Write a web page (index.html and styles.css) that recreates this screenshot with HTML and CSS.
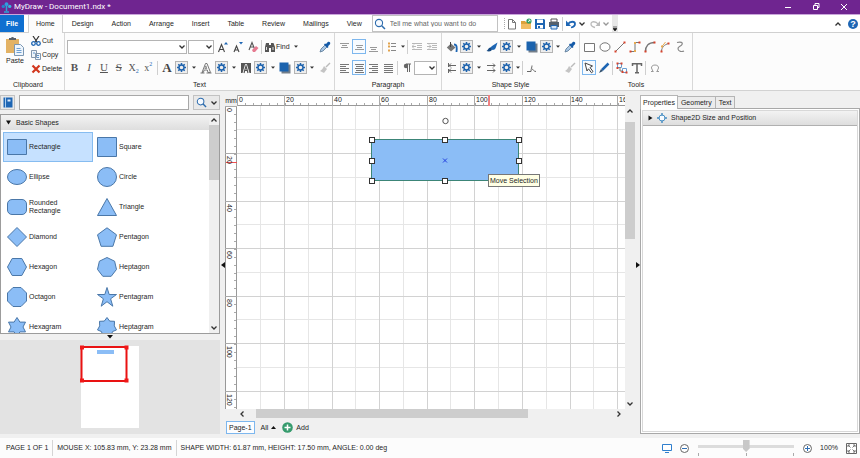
FILE: index.html
```html
<!DOCTYPE html>
<html lang="en">
<head>
<meta charset="utf-8">
<title>MyDraw - Document1.ndx *</title>
<link rel="stylesheet" href="styles.css">
</head>
<body>
<svg class="defs" width="0" height="0" aria-hidden="true">
  <symbol id="gear" viewBox="0 0 13 13"><rect x=".5" y=".5" width="12" height="12" fill="#eee" stroke="#b4b4b4"/><g stroke="#1d62ad" stroke-width="1.500"><path d="M6.500 2v9M2 6.500h9M3.300 3.300l6.400 6.400M9.700 3.300L3.300 9.700"/></g><circle cx="6.500" cy="6.500" r="2.500" fill="#eee" stroke="#1d62ad" stroke-width="1.400"/></symbol>
  <symbol id="caret" viewBox="0 0 4 3"><path d="M0 .5h4L2 2.800z" fill="#333"/></symbol>
  <symbol id="chevron" viewBox="0 0 8 6"><path d="M1.500 1.500L4 4l2.500-2.500" fill="none" stroke="#333" stroke-width="1.300"/></symbol>
  <symbol id="dropper" viewBox="0 0 12 12"><path d="M1 11l1-3 4-4 2 2-4 4z" fill="#a9c7e6" stroke="#587794" stroke-width=".8"/><path d="M5 3.500l3.500 3.500 1-1-.5-.8 2-2C12 1.700 10.300 0 8.800 1L7 3l-1-.5z" fill="#145aa8"/></symbol>
  <symbol id="painter" viewBox="0 0 12 12"><path d="M11 1L7 5" stroke="#bbb" stroke-width="1.500"/><path d="M5 4l3 3-3 4-4-2c2-1 3-3 4-5z" fill="#c4c4c4"/></symbol>
  <symbol id="shadow" viewBox="0 0 12 12"><rect x="2.500" y="2.500" width="9" height="9" fill="#747f8a"/><rect x=".5" y=".5" width="9" height="9" fill="#1b63ae"/></symbol>
  <symbol id="lens" viewBox="0 0 12 12"><circle cx="5" cy="5" r="3.600" fill="#f6faff" stroke="#2d6cad" stroke-width="1.100"/><path d="M7.700 7.700l3.300 3.300" stroke="#2d6cad" stroke-width="1.500"/></symbol>
</svg>

<header class="titlebar">
  <svg width="11" height="11" viewBox="0 0 11 11"><path d="M5.500 4v5M3 10h5" stroke="#2aa7d6" stroke-width="1.500"/><circle cx="5.500" cy="2.200" r="1.900" fill="#2e9ee0"/><circle cx="2.300" cy="4.400" r="1.700" fill="#2485cf"/><circle cx="8.700" cy="4.400" r="1.700" fill="#35b9dc"/></svg>
  <span class="title">MyDraw - Document1.ndx *</span>
  <div class="window-buttons">
    <button aria-label="Minimize"><svg width="8" height="8"><path d="M1 4.500h6" stroke="#fff"/></svg></button>
    <button aria-label="Restore"><svg width="8" height="8"><path d="M1.500 2.500h4v4h-4zM3 2V.5h4v4H6" fill="none" stroke="#fff"/></svg></button>
    <button aria-label="Close"><svg width="8" height="8"><path d="M1 1l6 6M7 1L1 7" stroke="#fff"/></svg></button>
  </div>
</header>

<nav class="tabs">
  <button class="tab file">File</button>
  <button class="tab home">Home</button>
  <button class="tab">Design</button>
  <button class="tab">Action</button>
  <button class="tab">Arrange</button>
  <button class="tab">Insert</button>
  <button class="tab">Table</button>
  <button class="tab">Review</button>
  <button class="tab">Mailings</button>
  <button class="tab">View</button>
  <label class="tell"><svg width="12" height="12"><use href="#lens"/></svg><input type="text" placeholder="Tell me what you want to do" aria-label="Tell me what you want to do"></label>
  <div class="quick">
    <span class="grip"></span>
    <button aria-label="New"><svg width="12" height="12"><path d="M2.500 1.500h4l3 3v6.500h-7zM6.500 1.500v3h3" fill="#fff" stroke="#777"/></svg></button>
    <button aria-label="Open"><svg width="12" height="12"><path d="M1 3h4l1 1h5v7H1z" fill="#dca23c"/><path d="M1 6h10v5H1z" fill="#f1bd63"/><circle cx="9" cy="3" r="2.600" fill="#2f9d68"/><path d="M8 4l2-2M8.500 2H10v1.500" stroke="#fff" fill="none" stroke-width=".8"/></svg></button>
    <button aria-label="Save"><svg width="12" height="12"><path d="M1 1h9l1 1v9H1z" fill="#1e66b4"/><path d="M3 1.500h6v3.500H3zM3 7h6v3.500H3z" fill="#fff"/><path d="M4 8h2v2H4z" fill="#1e66b4"/></svg></button>
    <button aria-label="Print"><svg width="12" height="12"><path d="M3 1h6v3H3z" fill="#fff" stroke="#555"/><path d="M1 4h10v5H1z" fill="#55606b"/><path d="M3 7.500h6v3.500H3z" fill="#d7e7f8" stroke="#1e66b4"/></svg></button>
    <span class="sep"></span>
    <button aria-label="Undo"><svg width="12" height="12"><path d="M3 6c2-3 7-3 7 0 0 2-2 3-4 3.500" fill="none" stroke="#1e66b4" stroke-width="1.800"/><path d="M1 2.500v5.500h5z" fill="#1e66b4"/></svg></button>
    <button class="narrow" aria-label="Undo list"><svg width="8" height="6"><use href="#chevron"/></svg></button>
    <button class="faded redo" aria-label="Redo"><svg width="12" height="12"><path d="M9 6C7 3 2 3 2 6c0 2 2 3 4 3.500" fill="none" stroke="#777" stroke-width="1.300"/><path d="M11 3v5H6.500z" fill="#777"/></svg></button>
    <button class="narrow faded" aria-label="Redo list"><svg width="8" height="6"><use href="#chevron"/></svg></button>
    <button class="more" aria-label="Customize"><svg width="4" height="6"><path d="M0 1h4M0 2.500h4L2 5z" fill="#111" stroke="#111" stroke-width=".6"/></svg></button>
  </div>
  <div class="tabs-end">
    <button aria-label="Collapse ribbon"><svg width="8" height="6"><path d="M1.500 4.500L4 2l2.500 2.500" fill="none" stroke="#333" stroke-width="1.300"/></svg></button>
    <button class="help" aria-label="Help">?</button>
  </div>
</nav>

<section class="ribbon">
  <div class="group clipboard">
    <div class="clip-body">
      <button class="paste"><svg width="20" height="20"><path d="M1 3h13v14H1z" fill="#e3b264"/><path d="M4 4V2h2a1.600 1.600 0 0 1 3 0h2v2z" fill="#5a5f66"/><path d="M9.500 8.500h6l3 3V19.500h-9z" fill="#eef5fc" stroke="#7b97b3"/><path d="M11.500 12.500h4M11.500 14.500h5M11.500 16.500h5" stroke="#6d9fd2"/></svg>Paste</button>
      <div class="clip-list">
        <button><svg width="10" height="10"><path d="M2 0l4 6M8 0L4 6" stroke="#333" stroke-width="1.200"/><circle cx="2.500" cy="7.500" r="1.800" fill="none" stroke="#1e66b4" stroke-width="1.300"/><circle cx="7.500" cy="7.500" r="1.800" fill="none" stroke="#1e66b4" stroke-width="1.300"/></svg>Cut</button>
        <button><svg width="10" height="10"><path d="M.5.5h5v7h-5zM4.500 3.500h5v6h-5z" fill="#edf4fb" stroke="#8397ad"/><path d="M2 3h2M6 5.500h2M6 7.500h2" stroke="#5d94cc"/></svg>Copy</button>
        <button><svg width="10" height="10"><path d="M1.500 1.500l7 7M8.500 1.500l-7 7" stroke="#d2371e" stroke-width="2.200"/></svg>Delete</button>
      </div>
    </div>
    <h2>Clipboard</h2>
  </div>

  <div class="group text">
    <div class="row">
      <span class="combo font"><select aria-label="Font"><option></option></select><svg width="8" height="6"><use href="#chevron"/></svg></span>
      <span class="combo size"><select aria-label="Font size"><option></option></select><svg width="8" height="6"><use href="#chevron"/></svg></span>
      <button class="tool" aria-label="Grow font"><svg width="12" height="12"><path d="M1.500 11L4.500 3.500 7.500 11M2.500 8.500h4" fill="none" stroke="#444" stroke-width="1.100"/><path d="M7 3.500L9 1l2 2.500z" fill="#1e66b4"/></svg></button>
      <button class="tool" aria-label="Shrink font"><svg width="12" height="12"><path d="M2 11l2.500-6L7 11M3 9h3" fill="none" stroke="#444" stroke-width="1.100"/><path d="M7 1l2 2.500L11 1z" fill="#1e66b4"/></svg></button>
      <button class="tool" aria-label="Clear format"><svg width="12" height="12"><path d="M2 9L5 1.500 8 9M3 6h4" fill="none" stroke="#555" stroke-width="1.100"/><path d="M5 9l4-4 2.500 2L8 11H6z" fill="#e67b91"/></svg></button>
      <span class="sep"></span>
      <button class="find"><svg width="12" height="12"><path d="M1 11V6l1-4h3v9zM7 11V2h2.500L11 6v5zM5 4h2v3H5z" fill="#555"/><path d="M2.500 6v3M9 6v3" stroke="#ddd"/></svg>Find<svg class="dd" width="4" height="3"><use href="#caret"/></svg></button>
      <button class="tool push" aria-label="Pick text style"><svg width="12" height="12"><use href="#dropper"/></svg></button>
    </div>
    <div class="row">
      <button class="tool letter bold">B</button>
      <button class="tool letter italic">I</button>
      <button class="tool letter under">U</button>
      <button class="tool letter strike">S</button>
      <button class="tool letter script">X<sub>2</sub></button>
      <button class="tool letter script">x<sup>2</sup></button>
      <span class="sep wide"></span>
      <button class="tool letter big">A</button><button class="tool" aria-label="Text fill"><svg width="13" height="13"><use href="#gear"/></svg></button><button class="drop" aria-label="More"><svg width="4" height="3"><use href="#caret"/></svg></button>
      <button class="tool" aria-label="Text outline"><svg width="12" height="12"><path d="M.5 11h4M6.500 11h5" stroke="#777"/><path d="M2 10.500L5.500 1.500h1.500l3.500 9H8l-.7-2.500H4.200l-.9 2.500z" fill="#fff" stroke="#777"/><path d="M4.800 6.500h2L5.900 3.800z" fill="#fff" stroke="#777" stroke-width=".8"/></svg></button><button class="tool" aria-label="Outline options"><svg width="13" height="13"><use href="#gear"/></svg></button><button class="drop" aria-label="More"><svg width="4" height="3"><use href="#caret"/></svg></button>
      <button class="tool" aria-label="Text background"><svg width="12" height="12"><path d="M1 1h10v10H1z" fill="#555"/><path d="M2.500 11L5.200 2h1.600l2.700 9z" fill="#fff"/><path d="M4 11L6 4l2 7M4.500 8.500h3" fill="none" stroke="#555" stroke-width="1.200"/></svg></button><button class="tool" aria-label="Background options"><svg width="13" height="13"><use href="#gear"/></svg></button><button class="drop" aria-label="More"><svg width="4" height="3"><use href="#caret"/></svg></button>
      <button class="tool" aria-label="Text shadow"><svg width="12" height="12"><use href="#shadow"/></svg></button><button class="tool" aria-label="Shadow options"><svg width="13" height="13"><use href="#gear"/></svg></button><button class="drop" aria-label="More"><svg width="4" height="3"><use href="#caret"/></svg></button>
      <button class="tool push" aria-label="Format painter"><svg width="12" height="12"><use href="#painter"/></svg></button>
    </div>
    <h2>Text</h2>
  </div>

  <div class="group paragraph">
    <div class="row">
      <button class="tool" aria-label="Align top"><svg width="9" height="10"><path d="M0 1.500h9M2 3.500h5M1 5.500h7" stroke="#999"/></svg></button>
      <button class="tool on" aria-label="Align middle"><svg width="9" height="10"><path d="M1 3.500h7M2 5.500h5M0 7.500h9" stroke="#999"/></svg></button>
      <button class="tool" aria-label="Align bottom"><svg width="9" height="10"><path d="M1 5.500h7M2 7.500h5M0 9.500h9" stroke="#999"/></svg></button>
      <span class="sep"></span>
      <button class="tool" aria-label="Bullets"><svg width="10" height="10"><path d="M1 1.500h2M1 4.500h2M1 8.500h2" stroke="#e2a34d" stroke-width="2"/><path d="M4 1.500h5M4 4.500h5M4 8.500h5" stroke="#888"/></svg></button>
      <button class="drop slim" aria-label="More"><svg width="4" height="3"><use href="#caret"/></svg></button>
      <span class="sep"></span>
      <button class="tool faded" aria-label="Decrease indent"><svg width="10" height="10"><path d="M0 1.500h10M5 3.500h5M5 5.500h5M0 7.500h10M4 4.500H0M2 2.500l-2 2 2 2" fill="none" stroke="#777"/></svg></button>
      <button class="tool faded" aria-label="Increase indent"><svg width="10" height="10"><path d="M0 1.500h10M5 3.500h5M5 5.500h5M0 7.500h10M0 4.500h4M2 2.500l2 2-2 2" fill="none" stroke="#777"/></svg></button>
    </div>
    <div class="row">
      <button class="tool" aria-label="Align left"><svg width="9" height="10"><path d="M0 1.500h9M0 3.500h6M0 5.500h9M0 7.500h6M0 9.500h9" stroke="#777"/></svg></button>
      <button class="tool on" aria-label="Align center"><svg width="9" height="10"><path d="M0 1.500h9M1 3.500h7M0 5.500h9M1 7.500h7M0 9.500h9" stroke="#777"/></svg></button>
      <button class="tool" aria-label="Align right"><svg width="9" height="10"><path d="M0 1.500h9M3 3.500h6M0 5.500h9M3 7.500h6M0 9.500h9" stroke="#777"/></svg></button>
      <button class="tool" aria-label="Justify"><svg width="9" height="10"><path d="M0 1.500h9M0 3.500h9M0 5.500h9M0 7.500h9M0 9.500h9" stroke="#777"/></svg></button>
      <span class="sep"></span>
      <button class="tool" aria-label="Text direction"><svg width="8" height="10"><path d="M4.500 1v8M6.500 1v8M3 1h5" stroke="#666"/><circle cx="3" cy="3" r="2.200" fill="#666"/></svg></button>
      <span class="combo spacing"><select aria-label="Line spacing"><option></option></select><svg width="8" height="6"><use href="#chevron"/></svg></span>
    </div>
    <h2>Paragraph</h2>
  </div>

  <div class="group style">
    <div class="row">
      <button class="tool" aria-label="Fill"><svg width="12" height="12"><path d="M5 2.500l4.500 4L5 10.500.8 6.500z" fill="#777"/><path d="M4.500 1v5" stroke="#444"/><path d="M8 3.500c3 0 3 3 2.500 7.500" fill="none" stroke="#1e66b4" stroke-width="1.800"/></svg></button><button class="tool" aria-label="Fill options"><svg width="13" height="13"><use href="#gear"/></svg></button><button class="drop" aria-label="More"><svg width="4" height="3"><use href="#caret"/></svg></button>
      <button class="tool" aria-label="Stroke"><svg width="12" height="12"><path d="M11.500 1.500L6 5l-2 2 2.500 2c2 0 3-1 3.500-3z" fill="#1e66b4"/><path d="M4.500 6.500C2 7 2.500 9 .5 10c2.500.8 5 .5 5.500-1.500z" fill="#174a82"/></svg></button><button class="tool" aria-label="Stroke options"><svg width="13" height="13"><use href="#gear"/></svg></button><button class="drop" aria-label="More"><svg width="4" height="3"><use href="#caret"/></svg></button>
      <button class="tool" aria-label="Shadow"><svg width="12" height="12"><use href="#shadow"/></svg></button><button class="tool" aria-label="Shadow options"><svg width="13" height="13"><use href="#gear"/></svg></button><button class="drop slim" aria-label="More"><svg width="4" height="3"><use href="#caret"/></svg></button>
      <button class="tool push" aria-label="Pick style"><svg width="12" height="12"><use href="#dropper"/></svg></button>
    </div>
    <div class="row">
      <button class="tool" aria-label="Begin arrow"><svg width="10" height="10"><path d="M1.500 0v4M1.500 6v4M1 2.500h8M1 7.500h8M4 .5l-2 2 2 2M4 5.500l-2 2 2 2" fill="none" stroke="#666"/></svg></button><button class="tool" aria-label="Begin options"><svg width="13" height="13"><use href="#gear"/></svg></button><button class="drop" aria-label="More"><svg width="4" height="3"><use href="#caret"/></svg></button>
      <button class="tool" aria-label="End arrow"><svg width="10" height="10"><path d="M0 2.500h8M0 7.500h8M6 .5l2 2-2 2M6 5.500l2 2-2 2" fill="none" stroke="#666"/></svg></button><button class="tool" aria-label="End options"><svg width="13" height="13"><use href="#gear"/></svg></button><button class="drop slim" aria-label="More"><svg width="4" height="3"><use href="#caret"/></svg></button>
      <span class="sep"></span>
      <button class="tool" aria-label="Line jump"><svg width="10" height="10"><path d="M0 8.500h4c0-3 1-4 1-6M5 6c1 0 1.500 2.500 4 2.500" fill="none" stroke="#666"/></svg></button>
      <button class="tool push" aria-label="Format painter"><svg width="12" height="12"><use href="#painter"/></svg></button>
    </div>
    <h2>Shape Style</h2>
  </div>

  <div class="group tools">
    <div class="row">
      <button class="tool" aria-label="Rectangle tool"><svg width="12" height="10"><path d="M.5 1.500h10v8H.5z" fill="#fff" stroke="#777"/></svg></button>
      <button class="tool" aria-label="Ellipse tool"><svg width="12" height="10"><ellipse cx="6" cy="5" rx="5" ry="4.200" fill="#fff" stroke="#777"/></svg></button>
      <button class="tool" aria-label="Line tool"><svg width="12" height="12"><path d="M1.500 10.500l9-9" stroke="#777"/><path d="M.5 9.500h2v2h-2zM9.500.5h2v2h-2z" fill="#d8432c"/></svg></button>
      <button class="tool" aria-label="Polyline tool"><svg width="12" height="12"><path d="M1.500 10.500H6v-9h4.500" fill="none" stroke="#777"/><path d="M.5 9.500h2v2h-2zM9.500.5h2v2h-2z" fill="#d8432c"/><path d="M5 1h2v2H5zM5 9h2v2H5z" fill="#e8aa50"/></svg></button>
      <button class="tool" aria-label="Arc tool"><svg width="12" height="12"><path d="M1.500 10.500c0-5 3-9 9-9" fill="none" stroke="#777" stroke-width="1.500"/><path d="M.5 9.500h2v2h-2zM9.500.5h2v2h-2z" fill="#d8432c"/></svg></button>
      <button class="tool" aria-label="Curve tool"><svg width="12" height="12"><path d="M2.500 10.500c0-4 3-7 7-8" fill="none" stroke="#777"/><path d="M3 5.500L6.500 1" stroke="#e8aa50"/><path d="M1.500 9.500h2v2h-2zM8.500 1.500h2v2h-2z" fill="#d8432c"/><path d="M2 4.500h2v2H2z" fill="#e8aa50"/></svg></button>
      <button class="tool" aria-label="Freehand tool"><svg width="10" height="12"><path d="M2 1.500c4-1 6 0 5 2S2.500 5.500 3 8s4 3 6 2" fill="none" stroke="#888" stroke-width="1.200"/></svg></button>
    </div>
    <div class="row">
      <button class="tool on" aria-label="Pointer tool"><svg width="12" height="12"><path d="M2 1l7.500 3-2.500 1.500 3 4-1.500 1.300-3-4L4 9z" fill="#fff" stroke="#444"/></svg></button>
      <button class="tool" aria-label="Pencil tool"><svg width="12" height="12"><path d="M10.500 1.500L4 8" stroke="#1e66b4" stroke-width="2.500"/><path d="M3 7l2 2-4 2z" fill="#32506e"/></svg></button>
      <span class="sep"></span>
      <button class="tool" aria-label="Connector tool"><svg width="12" height="12"><path d="M1.500 1.500h4v4h-4zM6.500 6.500h4v4h-4z" fill="#fff" stroke="#6a9ed3"/><path d="M4 5v4h3" stroke="#777" fill="none"/><path d="M.5.5h2v2h-2zM4.500.5h2v2h-2zM.5 5h2v2h-2zM9.500 9.500h2v2h-2zM5.500 9h2v2h-2z" fill="#d8432c"/></svg></button>
      <button class="tool" aria-label="Text tool"><svg width="12" height="12"><path d="M1.500 4V1.700h9V4M6 2v9M4 10.700h4" fill="none" stroke="#666" stroke-width="1.500"/></svg></button>
      <span class="sep"></span>
      <button class="tool" aria-label="Lasso tool"><svg width="10" height="10"><path d="M3 8.500L1.500 5C1 1 9 1 8.500 5L7 8.500M1 8.500h2.500M6.500 8.500H9" fill="none" stroke="#999"/></svg></button>
    </div>
    <h2>Tools</h2>
  </div>
</section>

<main class="work">
  <aside class="library">
    <div class="find-row">
      <button class="book" aria-label="Libraries"><svg width="10" height="11"><path d="M.5.5h9v10h-9z" fill="#1e66b4"/><path d="M2.500 0v11" stroke="#a9cbed"/><path d="M4.500 2.500h3v2h-3z" fill="#dceafa"/></svg></button>
      <input type="text" aria-label="Find shapes">
      <button class="go" aria-label="Search"><svg width="11" height="11"><use href="#lens"/></svg><svg width="8" height="6"><use href="#chevron"/></svg></button>
    </div>
    <div class="shapes">
      <div class="shape-area">
        <button class="stencil"><svg width="5" height="5"><path d="M0 .5h5l-2.500 4z" fill="#111"/></svg>Basic Shapes</button>
        <div class="shape-grid">
          <button class="shape sel"><svg viewBox="0 0 20 20"><path d="M.5 2.500h19v15H.5z"/></svg>Rectangle</button>
          <button class="shape"><svg viewBox="0 0 20 20"><path d="M.5.5h19v19H.5z"/></svg>Square</button>
          <button class="shape"><svg viewBox="0 0 20 20"><ellipse cx="10" cy="10" rx="9.500" ry="7.500"/></svg>Ellipse</button>
          <button class="shape"><svg viewBox="0 0 20 20"><circle cx="10" cy="10" r="9.500"/></svg>Circle</button>
          <button class="shape"><svg viewBox="0 0 20 20"><rect x=".5" y="2.500" width="19" height="15" rx="4.500"/></svg><span>Rounded<br>Rectangle</span></button>
          <button class="shape"><svg viewBox="0 0 20 20"><path d="M10 1.500l9.500 17H.5z"/></svg>Triangle</button>
          <button class="shape"><svg viewBox="0 0 20 20"><path d="M10 .5l9.500 9.500-9.500 9.500L.5 10z"/></svg>Diamond</button>
          <button class="shape"><svg viewBox="0 0 20 20"><path d="M10 .8l9.500 7-3.600 11.500H4.100L.5 7.800z"/></svg>Pentagon</button>
          <button class="shape"><svg viewBox="0 0 20 20"><path d="M5.200 1.500h9.600L19.500 10l-4.700 8.500H5.200L.5 10z"/></svg>Hexagon</button>
          <button class="shape"><svg viewBox="0 0 20 20"><path d="M10 .5l7.600 3.700 1.900 8.200-5.300 6.900H5.800L.5 12.400l1.900-8.200z"/></svg>Heptagon</button>
          <button class="shape"><svg viewBox="0 0 20 20"><path d="M6 .5h8L19.500 6v8L14 19.500H6L.5 14V6z"/></svg>Octagon</button>
          <button class="shape"><svg viewBox="0 0 20 20"><path d="M10 .5l2.200 7h7.300l-5.900 4.300 2.200 7.400-5.800-4.500-5.800 4.500 2.200-7.400L.5 7.500h7.300z"/></svg>Pentagram</button>
          <button class="shape"><svg viewBox="0 0 20 20"><path d="M10 .5l2.900 4.600h5.600L16 10l2.500 4.900h-5.600L10 19.500l-2.900-4.600H1.500L4 10 1.500 5.100h5.600z"/></svg>Hexagram</button>
          <button class="shape"><svg viewBox="0 0 20 20"><path d="M10 .5l2.700 3.600 4.800.2-.2 4.600 2.200 4-4 1.700-1.500 4.700-4-1.900-4 1.900-1.500-4.700-4-1.700 2.200-4-.2-4.600 4.800-.2z"/></svg>Heptagram</button>
        </div>
      </div>
      <div class="vbar"><svg width="8" height="6"><path d="M1.500 4.500L4 2l2.500 2.500" fill="none" stroke="#333" stroke-width="1.300"/></svg><div class="track"><div class="thumb lib-thumb"></div></div><svg width="8" height="6"><use href="#chevron"/></svg></div>
    </div>
    <div class="hsplit"><svg width="6" height="4"><path d="M0 0h6L3 3.500z" fill="#111"/></svg></div>
    <div class="overview"><svg width="62" height="84"><path d="M2 1h58v82H2z" fill="#fff"/><path d="M18 5h17v4H18z" fill="#8bbdf6"/><path d="M2.500 2h45v34h-45z" fill="none" stroke="#e91212" stroke-width="2"/><path d="M1 .5h4v4H1zM45.500.5h4v4h-4zM1 33.500h4v4H1zM45.500 33.500h4v4h-4z" fill="#f01818"/></svg></div>
  </aside>

  <div class="vsplit"><svg width="4" height="6"><path d="M4 0v6L0 3z" fill="#111"/></svg></div>

  <section class="editor">
    <div class="unit">mm</div>
    <svg class="ruler-h"><path d="M0 .5h2000" stroke="#999"/><path d="M0 10.500h2000" stroke="#999"/><path d="M0 9h2000" stroke="#aaa" stroke-width="2" stroke-dasharray="1 6.930"/><path d="M.5 0v11M47.500 0v11M95.500 0v11M142.500 0v11M190.500 0v11M237.500 0v11M285.500 0v11M333.500 0v11M380.500 0v11" stroke="#aaa"/><path d="M252 0v11" stroke="#f08080" stroke-width="2"/>
      <text x="2" y="7">0</text><text x="49" y="7">20</text><text x="97" y="7">40</text><text x="144" y="7">60</text><text x="192" y="7">80</text><text x="239" y="7">100</text><text x="287" y="7">120</text><text x="334" y="7">140</text><text x="382" y="7">160</text></svg>
    <svg class="ruler-v"><path d="M.5 0v2000" stroke="#999"/><path d="M11.500 0v2000" stroke="#999"/><path d="M10 0v2000" stroke="#aaa" stroke-width="2" stroke-dasharray="1 6.930"/><path d="M0 .5h12M0 47.500h12M0 95.500h12M0 142.500h12M0 190.500h12M0 237.500h12M0 285.500h12" stroke="#aaa"/><path d="M1 56h11" stroke="#f05050"/>
      <g transform="rotate(90)"><text x="2" y="-2">0</text><text x="50" y="-2">20</text><text x="98" y="-2">40</text><text x="145" y="-2">60</text><text x="193" y="-2">80</text><text x="240" y="-2">100</text><text x="288" y="-2">120</text></g></svg>
    <div class="canvas">
      <svg class="page"><path d="M23.500 0v2000M71.500 0v2000M118.500 0v2000M166.500 0v2000M213.500 0v2000M261.500 0v2000M309.500 0v2000M356.500 0v2000M0 23.500h2000M0 71.500h2000M0 118.500h2000M0 166.500h2000M0 213.500h2000M0 261.500h2000" stroke="#e6e6e6"/><path d="M47.500 0v2000M95.500 0v2000M142.500 0v2000M190.500 0v2000M237.500 0v2000M285.500 0v2000M333.500 0v2000M380.500 0v2000M0 47.500h2000M0 95.500h2000M0 142.500h2000M0 190.500h2000M0 237.500h2000M0 285.500h2000" stroke="#d2d2d2"/>
        <path d="M134.500 33.500h147v41h-147z" fill="#8bbdf6" stroke="#3c8577"/>
        <path class="smooth" d="M206 52.500l4 4M210 52.500l-4 4" stroke="#2340e0"/>
        <circle cx="208.500" cy="15" r="2.700" fill="#fff" stroke="#555"/>
        <path d="M132.500 31.500h5v5h-5zM205.500 31.500h5v5h-5zM279.500 31.500h5v5h-5zM132.500 52.500h5v5h-5zM279.500 52.500h5v5h-5zM132.500 72.500h5v5h-5zM205.500 72.500h5v5h-5zM279.500 72.500h5v5h-5z" fill="#fff" stroke="#333"/>
      </svg>
      <div class="tip">Move Selection</div>
    </div>
    <div class="vbar canvas-v"><svg width="8" height="6"><path d="M1.500 4.500L4 2l2.500 2.500" fill="none" stroke="#333" stroke-width="1.300"/></svg><div class="track"><div class="thumb"></div></div><svg width="8" height="6"><use href="#chevron"/></svg></div>
    <div class="hbar"><svg width="6" height="8"><path d="M4.500 1.500L2 4l2.500 2.500" fill="none" stroke="#333" stroke-width="1.300"/></svg><div class="track"><div class="thumb"></div></div><svg width="6" height="8"><path d="M1.500 1.500L4 4 1.500 6.500" fill="none" stroke="#333" stroke-width="1.300"/></svg></div>
    <div class="pages">
      <button class="page-tab">Page-1</button>
      <button class="all">All<svg width="5" height="3"><path d="M0 3h5L2.500 0z" fill="#111"/></svg></button>
      <button class="add"><svg width="11" height="11"><circle cx="5.500" cy="5.500" r="5.300" fill="#369b6d"/><path d="M5.500 2.500v6M2.500 5.500h6" stroke="#fff" stroke-width="1.500"/></svg>Add</button>
    </div>
  </section>

  <div class="vsplit"><svg width="4" height="6"><path d="M0 0v6l4-3z" fill="#111"/></svg></div>

  <aside class="props">
    <div class="prop-tabs"><button class="active">Properties</button><button>Geometry</button><button>Text</button></div>
    <div class="prop-body">
      <button class="prop-head"><svg width="5" height="6"><path d="M.5.5L4.500 3l-4 2.500z" fill="#111"/></svg><svg width="10" height="10"><circle cx="5" cy="5" r="3" fill="#f5faff" stroke="#4a90c4"/><path d="M5 0v2.500M5 7.500V10M0 5h2.500M7.500 5H10" stroke="#4a90c4" stroke-width="1.500"/></svg>Shape2D Size and Position</button>
    </div>
  </aside>
</main>

<footer class="status">
  <span>PAGE 1 OF 1</span>
  <span>MOUSE X: 105.83 mm, Y: 23.28 mm</span>
  <span>SHAPE WIDTH: 61.87 mm, HEIGHT: 17.50 mm, ANGLE: 0.00 deg</span>
  <div class="zoom">
    <button aria-label="Presentation"><svg width="10" height="10"><path d="M.5 1.500h9v6h-9z" fill="#fff" stroke="#2f7fce"/><path d="M3 9.500h4" stroke="#2f7fce"/></svg></button>
    <button aria-label="Zoom out"><svg width="9" height="9"><circle cx="4.500" cy="4.500" r="4" fill="#fff" stroke="#666"/><path d="M2 4.500h5" stroke="#2f6fb5"/></svg></button>
    <div class="slider"><input type="range" min="0" max="100" value="50" aria-label="Zoom"><div class="ticks"><i></i><i></i><i></i></div></div>
    <button aria-label="Zoom in"><svg width="9" height="9"><circle cx="4.500" cy="4.500" r="4" fill="#fff" stroke="#666"/><path d="M2 4.500h5M4.500 2v5" stroke="#2f6fb5"/></svg></button>
    <output>100%</output>
    <button aria-label="Fit page"><svg width="11" height="11"><path d="M.5.500h10v10H.5z" fill="#fff" stroke="#666"/><path d="M2 4V2h2M7 2h2v2M9 7v2H7M4 9H2V7M2 2l2.500 2.500M9 2L6.500 4.500M9 9L6.500 6.500M2 9l2.500-2.500" fill="none" stroke="#777"/></svg></button>
  </div>
</footer>
</body>
</html>
```
FILE: styles.css
```css
* { box-sizing: border-box; }

html, body { height: 100%; }

body {
  margin: 0;
  display: flex;
  flex-direction: column;
  overflow: hidden;
  background: #f0f0f0;
  color: #1e1e1e;
  font: 7px/8px "Liberation Sans", Arial, sans-serif;
}

button, input, select {
  margin: 0;
  padding: 0;
  border: 0;
  border-radius: 0;
  background: none;
  color: inherit;
  font: inherit;
}

button {
  display: inline-flex;
  align-items: center;
  justify-content: center;
  white-space: nowrap;
}

svg { display: block; flex: none; }
.defs { position: absolute; }
.faded { opacity: 0.5; }

/* Title bar */
.titlebar {
  display: flex;
  align-items: center;
  height: 14px;
  padding: 0 12px 0 1px;
  background: #6f2590;
  color: #fff;
}
.title { margin-left: 2px; font: 8px/12px Roboto, sans-serif; }
.window-buttons { display: flex; gap: 20px; margin-left: auto; }

/* Ribbon tabs */
.tabs {
  display: flex;
  height: 19px;
  background: #fff;
  border-top: 1px solid #c9a6da;
  border-bottom: 1px solid #d0d0d0;
  white-space: nowrap;
}
.tab { padding: 0 9px; }
.tab.file { width: 24px; padding: 0; margin-right: 4px; background: #0f6fd0; color: #fff; font-weight: bold; }
.tab.home { padding: 0 7px; margin-bottom: -1px; border: solid #d0d0d0; border-width: 0 1px; background: #fcfcfc; }
.tell {
  display: flex;
  align-items: center;
  gap: 4px;
  width: 126px;
  height: 17px;
  margin-left: 1px;
  padding-left: 1px;
  border: 1px solid #c2c2c2;
}
.tell input { flex: 1; min-width: 0; outline: 0; }
.tell input::placeholder { color: #666; opacity: 1; }
.quick { display: flex; align-items: center; margin-left: 6px; }
.quick button { width: 14px; height: 14px; }
.quick .narrow { width: 9px; }
.quick .redo { margin-left: 1px; }
.quick .more { width: 6px; height: 17px; margin-left: 1px; align-items: flex-end; background: #e8e8e8; }
.grip { height: 11px; border-left: 1px dotted #aaa; }
.tabs-end { display: flex; align-items: center; gap: 6px; margin: 0 2px 0 auto; }
.help { width: 10px; height: 10px; border-radius: 50%; background: #1e66b4; color: #fff; font-size: 9px; font-weight: bold; }

/* Ribbon */
.ribbon {
  display: flex;
  height: 58px;
  background: #fcfcfc;
  border-bottom: 1px solid #d2d2d2;
}
.group { display: flex; flex-direction: column; padding: 5px 2px 1px; border-right: 1px solid #d8d8d8; }
.group h2 { margin: auto 0 0; font: inherit; text-align: center; }
.row { display: flex; align-items: center; height: 17px; margin-bottom: 4px; }
.sep { width: 1px; height: 14px; margin: 0 1px; background: #cfcfcf; }
.sep.wide { margin-right: 2px; }
.tool { width: 15px; height: 15px; }
.tool.on { border: 1px solid #7db7ee; background: #f7fbff; width: 14px; height: 15px; }
.drop { width: 10px; height: 15px; }
.drop.slim { width: 7px; }
.push { margin-left: auto; }

.clipboard { width: 65px; padding-top: 3px; }
.clip-body { display: flex; gap: 6px; }
.clipboard h2 { padding-right: 8px; }
.paste { flex-direction: column; gap: 1px; padding-left: 3px; align-self: flex-start; }
.clip-list { display: flex; flex-direction: column; gap: 4px; align-items: flex-start; }
.clip-list button { gap: 1px; height: 10px; }

.text { width: 270px; }
.paragraph { width: 107px; }
.style { width: 138px; }
.tools { width: 113px; }

.combo { display: grid; align-items: center; margin-right: 1px; }
.combo > * { grid-area: 1 / 1; }
.combo select { appearance: none; width: 100%; height: 14px; border: 1px solid #b4b4b4; background: #fff; }
.combo svg { justify-self: end; margin-right: 1px; pointer-events: none; }
.combo.font { width: 120px; }
.combo.size { width: 26px; }
.combo.spacing { width: 23px; }
.find { gap: 0; margin-left: 1px; }
.find .dd { margin-left: 4px; }

.letter { font: 11px/15px "Liberation Serif", "Times New Roman", serif; color: #555; }
.letter.bold { font-weight: bold; }
.letter.italic { font-style: italic; }
.letter.under { text-decoration: underline; }
.letter.strike { text-decoration: line-through; }
.letter.script { font-size: 10px; }
.letter sub, .letter sup { color: #1e66b4; font-size: 6px; line-height: 8px; }
.letter sub { align-self: flex-end; }
.letter sup { align-self: flex-start; }
.letter.big { font-size: 13px; font-weight: bold; color: #444; }

/* Workspace */
.work {
  flex: 1;
  min-height: 0;
  display: flex;
  padding: 4px 0;
}
.library { width: 220px; display: flex; flex-direction: column; }
.find-row { display: flex; gap: 4px; height: 15px; margin-bottom: 4px; }
.find-row input { flex: 1; min-width: 0; border: 1px solid #a8a8a8; background: #fff; }
.book { width: 15px; border: 1px solid #c2c2c2; background: #e9e9e9; }
.go { width: 27px; gap: 3px; border: 1px solid #c2c2c2; background: #e9e9e9; }
.shapes { flex: 1; min-height: 0; display: flex; border: 1px solid #9c9c9c; background: #fff; }
.shape-area { flex: 1; min-width: 0; overflow: hidden; }
.stencil {
  width: 100%;
  height: 15px;
  justify-content: flex-start;
  gap: 5px;
  padding-left: 5px;
  background: linear-gradient(#f3f3f3, #dedede);
}
.shape-grid { display: grid; grid-template-columns: 90px 90px; grid-auto-rows: 30px; padding: 2px; }
.shape { justify-content: flex-start; gap: 2px; padding-left: 4px; text-align: left; }
.shape svg { width: 20px; height: 20px; fill: #8bbdf6; stroke: #4a77a8; }
.shape.sel { border: 1px solid #86bcf0; background: #c6e1ff; padding-left: 3px; }
.vbar { width: 10px; display: flex; flex-direction: column; align-items: center; padding: 2px 0; background: #f0f0f0; }
.track { flex: 1; align-self: stretch; display: flex; }
.vbar .track { margin: 2px 0; }
.canvas-v .track { margin: 8px 0; }
.thumb { background: #cdcdcd; }
.vbar .thumb { width: 100%; height: 43%; }
.vbar .lib-thumb { height: 28%; }
.hsplit { display: flex; justify-content: center; height: 6px; padding-top: 1px; }
.overview { flex: none; height: 94px; display: flex; justify-content: center; padding-top: 5px; background: #e3e3e3; }
.vsplit { width: 5px; display: flex; align-items: center; justify-content: flex-end; }

/* Editor */
.editor {
  flex: 1;
  min-width: 0;
  display: grid;
  grid-template: 11px 1fr 10px 15px / 12px 1fr 10px;
}
.unit { display: flex; align-items: center; justify-content: center; }
.ruler-h, .ruler-v { width: 100%; height: 100%; background: #fff; fill: #222; overflow: hidden; }
.ruler-h path, .ruler-v path, .page path { shape-rendering: crispEdges; }
.page .smooth { shape-rendering: auto; }
.ruler-v { grid-area: 2 / 1; }
.canvas { grid-area: 2 / 2; position: relative; min-width: 0; min-height: 0; background: #fff; overflow: hidden; }
.page { width: 100%; height: 100%; fill: none; }
.tip {
  position: absolute;
  left: 251px;
  top: 68px;
  padding: 1px;
  border: 1px solid #777;
  background: #ffffe4;
  line-height: 9px;
  white-space: nowrap;
}
.canvas-v { grid-area: 2 / 3; }
.hbar { grid-area: 3 / 2; display: flex; align-items: center; padding: 0 3px 0 2px; gap: 11px; }
.hbar .thumb { width: 78%; height: 9px; }
.hbar .track { height: 9px; }
.pages { grid-area: 4 / 1 / 5 / 4; display: flex; align-items: flex-end; padding-left: 1px; }
.pages button { height: 13px; }
.page-tab { padding: 0 2px; border: 1px solid #7db7ee; background: #fcfdff; }
.all { gap: 3px; margin-left: 6px; }
.add { gap: 3px; margin-left: 6px; }

/* Properties */
.props { width: 220px; display: flex; flex-direction: column; }
.prop-tabs { display: flex; align-items: flex-end; height: 13px; }
.prop-tabs button { height: 12px; padding: 0 3px; border: solid #b5b5b5; border-width: 1px 1px 0 0; background: #ececec; }
.prop-tabs .active { height: 14px; margin-bottom: -1px; padding: 0 2px; border-left-width: 1px; background: #fff; z-index: 1; }
.prop-body { flex: 1; padding: 1px; border: 1px solid #a8a8a8; background: #fff; outline: 1px solid #d8d8d8; outline-offset: -3px; }
.prop-head {
  width: 100%;
  height: 16px;
  justify-content: flex-start;
  gap: 4px;
  padding-left: 5px;
  border: 1px solid #b0b0b0;
  background: linear-gradient(#f3f3f3, #dedede);
}

/* Status bar */
.status { display: flex; align-items: center; height: 20px; background: #fcfcfc; white-space: nowrap; }
.status > span { display: flex; align-items: center; height: 16px; padding: 0 4px; border-right: 1px solid #d5d5d5; }
.status > span:first-child { padding-left: 6px; }
.status > span:nth-child(3) { border: 0; }
.zoom { display: flex; align-items: center; gap: 8px; margin: 0 3px 0 auto; }
.slider { width: 96px; margin: 0 1px; }
.slider input { display: block; width: 100%; height: 13px; appearance: none; }
.slider input::-webkit-slider-runnable-track { height: 3px; background: #dcdcdc; }
.slider input::-webkit-slider-thumb {
  appearance: none;
  width: 7px;
  height: 12px;
  margin-top: -5px;
  background: #c8c8c8;
  clip-path: polygon(0 0, 100% 0, 100% 70%, 50% 100%, 0 70%);
}
.ticks { display: flex; justify-content: space-between; }
.ticks i { width: 1px; height: 3px; background: #aaa; }
```
